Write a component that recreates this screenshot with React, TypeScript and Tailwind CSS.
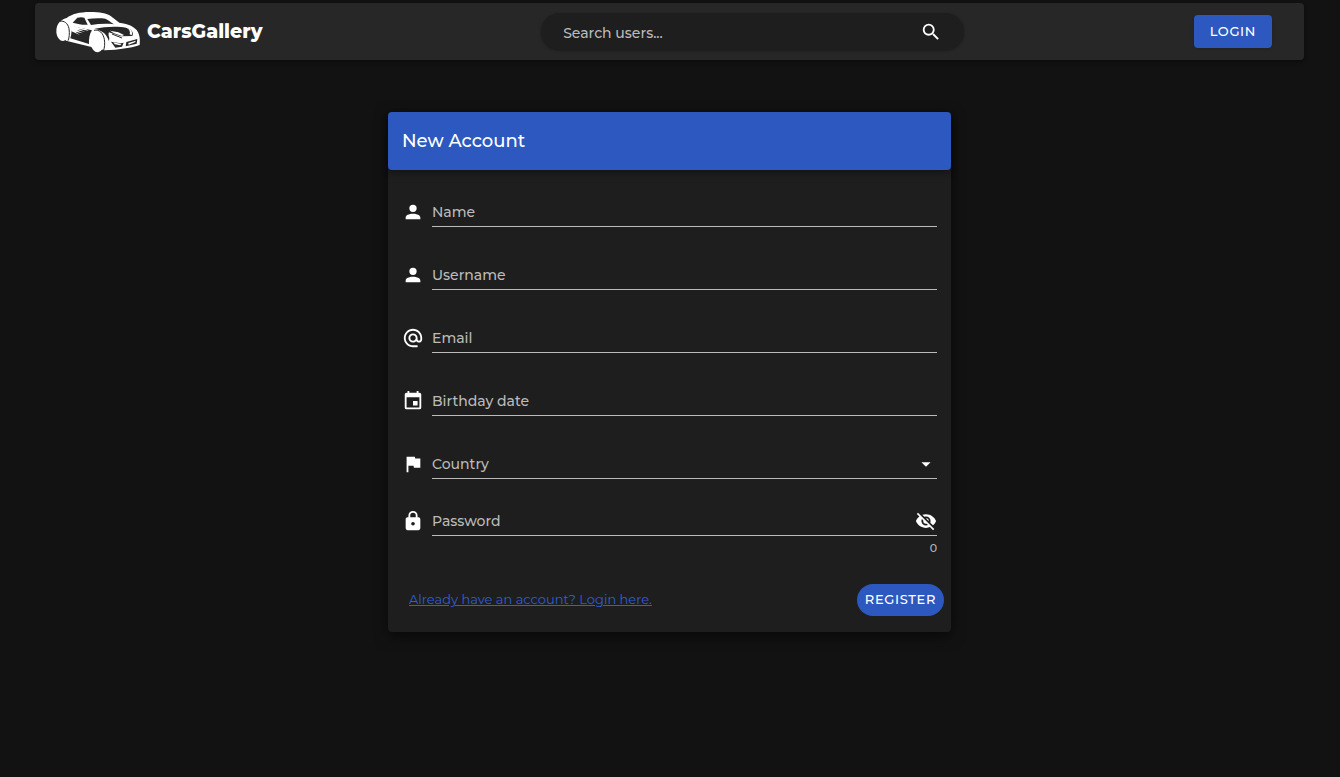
import { useState } from "react";
import type { ReactNode } from "react";

const icons = {
  account:
    "M12,4A4,4 0 0,1 16,8A4,4 0 0,1 12,12A4,4 0 0,1 8,8A4,4 0 0,1 12,4M12,14C16.42,14 20,15.79 20,18V20H4V18C4,15.79 7.58,14 12,14Z",
  at: "M12,15C12.81,15 13.5,14.7 14.11,14.11C14.7,13.5 15,12.81 15,12C15,11.19 14.7,10.5 14.11,9.89C13.5,9.3 12.81,9 12,9C11.19,9 10.5,9.3 9.89,9.89C9.3,10.5 9,11.19 9,12C9,12.81 9.3,13.5 9.89,14.11C10.5,14.7 11.19,15 12,15M12,2C14.75,2 17.1,3 19.05,4.95C21,6.9 22,9.25 22,12V13.45C22,14.45 21.65,15.3 21,16C20.3,16.67 19.5,17 18.5,17C17.3,17 16.31,16.5 15.56,15.5C14.56,16.5 13.38,17 12,17C10.63,17 9.45,16.5 8.46,15.54C7.5,14.55 7,13.38 7,12C7,10.63 7.5,9.45 8.46,8.46C9.45,7.5 10.63,7 12,7C13.38,7 14.55,7.5 15.54,8.46C16.5,9.45 17,10.63 17,12V13.45C17,13.86 17.16,14.22 17.46,14.53C17.76,14.84 18.11,15 18.5,15C18.92,15 19.27,14.84 19.57,14.53C19.87,14.22 20,13.86 20,13.45V12C20,9.81 19.23,7.93 17.65,6.35C16.07,4.77 14.19,4 12,4C9.81,4 7.93,4.77 6.35,6.35C4.77,7.93 4,9.81 4,12C4,14.19 4.77,16.07 6.35,17.65C7.93,19.23 9.81,20 12,20H17V22H12C9.25,22 6.9,21 4.95,19.05C3,17.1 2,14.75 2,12C2,9.25 3,6.9 4.95,4.95C6.9,3 9.25,2 12,2Z",
  calendar:
    "M19,19H5V8H19M16,1V3H8V1H6V3H5C3.89,3 3,3.89 3,5V19A2,2 0 0,0 5,21H19A2,2 0 0,0 21,19V5C21,3.89 20.1,3 19,3H18V1M17,12H12V17H17V12Z",
  flag: "M14.4,6L14,4H5V21H7V14H12.6L13,16H20V6H14.4Z",
  lock: "M12,17A2,2 0 0,0 14,15C14,13.89 13.1,13 12,13A2,2 0 0,0 10,15A2,2 0 0,0 12,17M18,8A2,2 0 0,1 20,10V20A2,2 0 0,1 18,22H6A2,2 0 0,1 4,20V10C4,8.89 4.9,8 6,8H7V6A5,5 0 0,1 12,1A5,5 0 0,1 17,6V8H18M12,3A3,3 0 0,0 9,6V8H15V6A3,3 0 0,0 12,3Z",
  menuDown: "M7,10L12,15L17,10H7Z",
  eyeOff:
    "M11.83,9L15,12.16C15,12.11 15,12.05 15,12A3,3 0 0,0 12,9C11.94,9 11.89,9 11.83,9M7.53,9.8L9.08,11.35C9.03,11.56 9,11.77 9,12A3,3 0 0,0 12,15C12.22,15 12.44,14.97 12.65,14.92L14.2,16.47C13.53,16.8 12.79,17 12,17A5,5 0 0,1 7,12C7,11.21 7.2,10.47 7.53,9.8M2,4.27L4.28,6.55L4.73,7C3.08,8.3 1.78,10 1,12C2.73,16.39 7,19.5 12,19.5C13.55,19.5 15.03,19.2 16.38,18.66L16.81,19.08L19.73,22L21,20.73L3.27,3M12,7A5,5 0 0,1 17,12C17,12.64 16.87,13.26 16.64,13.82L19.57,16.75C21.07,15.5 22.27,13.86 23,12C21.27,7.61 17,4.5 12,4.5C10.6,4.5 9.26,4.75 8,5.2L10.17,7.35C10.74,7.13 11.35,7 12,7Z",
  eye: "M12,9A3,3 0 0,0 9,12A3,3 0 0,0 12,15A3,3 0 0,0 15,12A3,3 0 0,0 12,9M12,17A5,5 0 0,1 7,12A5,5 0 0,1 12,7A5,5 0 0,1 17,12A5,5 0 0,1 12,17M12,4.5C7,4.5 2.73,7.61 1,12C2.73,16.39 7,19.5 12,19.5C17,19.5 21.27,16.39 23,12C21.27,7.61 17,4.5 12,4.5Z",
  magnify:
    "M9.5,3A6.5,6.5 0 0,1 16,9.5C16,11.11 15.41,12.59 14.44,13.73L14.71,14H15.5L20.5,19L19,20.5L14,15.5V14.71L13.73,14.44C12.59,15.41 11.11,16 9.5,16A6.5,6.5 0 0,1 3,9.5A6.5,6.5 0 0,1 9.5,3M9.5,5C7,5 5,7 5,9.5C5,12 7,14 9.5,14C12,14 14,12 14,9.5C14,7 12,5 9.5,5Z",
};

type IconName = keyof typeof icons;

function Icon({ name }: { name: IconName }) {
  return (
    <svg viewBox="0 0 24 24" className="size-[22px] shrink-0 fill-white" aria-hidden="true">
      <path d={icons[name]} />
    </svg>
  );
}

function CarLogo() {
  return (
    <svg viewBox="0 0 285 144" className="h-12 w-[95px]" aria-hidden="true">
      <g fill="#fff">
        <path d="M20 60C24 42 36 34 50 30C66 18 88 12 120 12C150 12 170 16 182 24L208 44C232 47 250 54 260 66C268 78 271 90 269 111C252 118 225 121 195 125L164 127L48 98Z" />
        <ellipse cx="37" cy="72" rx="18" ry="27" transform="rotate(-6 37 72)" />
        <ellipse cx="141" cy="102" rx="20" ry="31" transform="rotate(-6 141 102)" />
      </g>
      <g fill="#272727">
        <path d="M68 44L82 29C90 27 97 27 103 29L113 50C98 51 84 48 68 44Z" />
        <path d="M112 33C132 30 152 30 166 32C176 37 184 43 192 49C168 46 145 48 123 51Z" />
        <path d="M62 54L126 67C119 77 116 93 117 108L61 91C65 78 66 66 62 54Z" />
        <path d="M134 62C165 55 205 54 228 59C246 64 252 74 247 84L212 85L177 73C174 79 176 84 178 90L177 100C171 80 160 68 134 62Z" />
        <path d="M183 101L212 106L221 104L216 116L196 119Z" />
        <path d="M229 102L262 93L260 107L227 115Z" />
      </g>
      <g fill="none" stroke="#272727" strokeWidth="3">
        <path d="M30 40C42 37 54 46 57 62C59 78 58 88 54 98" />
        <path d="M132 67C148 63 160 76 163 94C165 108 164 118 160 130" />
        <path d="M186 78L216 90" />
      </g>
      <g fill="#fff">
        <path d="M60 52L110 64L116 68L84 63L106 71L80 67L98 76L76 71L90 81L64 70Z" />
        <path d="M180 68L205 73L222 81L216 84L192 76Z" />
        <path d="M230 59C243 63 249 70 245 82L239 79C242 71 238 64 230 59Z" />
        <path d="M190 103L214 108L211 112L194 109Z" />
        <path d="M235 105L258 98L255 103L236 110Z" />
      </g>
    </svg>
  );
}

function Field({
  id,
  label,
  icon,
  children,
}: {
  id: string;
  label: string;
  icon: IconName;
  children: ReactNode;
}) {
  return (
    <div className="flex items-start gap-2">
      <div className="flex h-7 items-center">
        <Icon name={icon} />
      </div>
      <div className="relative flex h-[29px] flex-1 items-center border-b border-[#bbbbbb] focus-within:border-white">
        {children}
        <label
          htmlFor={id}
          className="pointer-events-none absolute left-0 text-sm leading-7 text-[#bbbbbb] peer-focus:-top-5 peer-focus:text-xs peer-[:not(:placeholder-shown):not(select)]:-top-5 peer-[:not(:placeholder-shown):not(select)]:text-xs peer-[select:valid]:-top-5 peer-[select:valid]:text-xs"
        >
          {label}
        </label>
      </div>
    </div>
  );
}

const control = "peer h-7 w-full min-w-0 flex-1 bg-transparent text-sm text-white outline-none";

export default function App() {
  const [password, setPassword] = useState("");
  const [visible, setVisible] = useState(false);

  return (
    <div className="min-h-screen bg-[#121212] pt-[3px] font-['Montserrat','Inter',sans-serif] font-medium text-white">
      <header className="mr-9 ml-[35px] grid h-[57px] grid-cols-[8fr_7fr_5fr] items-center rounded-sm bg-[#272727] pr-8 pl-[15px] shadow-[0_2px_4px_rgba(0,0,0,0.4)]">
        <a href="#home" className="flex items-center gap-0.5">
          <CarLogo />
          <span className="text-[19px] leading-7 font-extrabold">CarsGallery</span>
        </a>
        <form
          role="search"
          className="flex h-[37px] w-full max-w-[423px] items-center justify-self-center rounded-full bg-[#1e1e1e] px-[22px] shadow-[0_1px_3px_rgba(0,0,0,0.3)]"
          onSubmit={(e) => e.preventDefault()}
        >
          <input
            type="text"
            aria-label="Search users"
            placeholder="Search users..."
            className="min-w-0 flex-1 bg-transparent pt-0.5 text-sm outline-none placeholder:text-[#bbbbbb]"
          />
          <button type="submit" aria-label="Search">
            <Icon name="magnify" />
          </button>
        </form>
        <button
          type="button"
          className="h-[33px] justify-self-end rounded-sm bg-[#2c58c0] px-4 text-[13px] tracking-wider shadow-sm"
        >
          LOGIN
        </button>
      </header>

      <main className="pt-[52px] pr-px">
        <form
          className="mx-auto w-full max-w-[563px] rounded-sm bg-[#1e1e1e] shadow-[0_4px_14px_rgba(0,0,0,0.55)]"
          onSubmit={(e) => e.preventDefault()}
        >
          <h1 className="flex h-[58px] items-center rounded-sm bg-[#2c58c0] px-3.5 text-lg shadow-[0_3px_6px_rgba(0,0,0,0.35)]">
            New Account
          </h1>
          <div className="px-3.5 pt-7">
            <div className="flex flex-col gap-[34px]">
              <Field id="name" label="Name" icon="account">
                <input id="name" type="text" placeholder=" " className={control} />
              </Field>
              <Field id="username" label="Username" icon="account">
                <input id="username" type="text" placeholder=" " className={control} />
              </Field>
              <Field id="email" label="Email" icon="at">
                <input id="email" type="email" placeholder=" " className={control} />
              </Field>
              <Field id="birthday" label="Birthday date" icon="calendar">
                <input id="birthday" type="text" placeholder=" " className={control} />
              </Field>
              <Field id="country" label="Country" icon="flag">
                <select id="country" required defaultValue="" className={`${control} appearance-none`}>
                  <option value="" />
                </select>
                <span className="pointer-events-none">
                  <Icon name="menuDown" />
                </span>
              </Field>
            </div>
            <div className="pt-7">
              <Field id="password" label="Password" icon="lock">
                <input
                  id="password"
                  type={visible ? "text" : "password"}
                  placeholder=" "
                  value={password}
                  onChange={(e) => setPassword(e.target.value)}
                  className={control}
                />
                <button type="button" aria-label="Toggle password visibility" onClick={() => setVisible(!visible)}>
                  <Icon name={visible ? "eye" : "eyeOff"} />
                </button>
              </Field>
              <p className="pt-1 text-right text-[11px] leading-4 text-[#bbbbbb]">{password.length}</p>
            </div>
          </div>
          <div className="flex items-center justify-between pt-7 pr-[7px] pb-4 pl-[21px]">
            <a href="#login" className="text-[13px] font-normal text-[#2f5fd3] underline">
              Already have an account? Login here.
            </a>
            <button
              type="submit"
              className="h-8 rounded-full bg-[#2c58c0] px-2 text-[13px] tracking-wider"
            >
              REGISTER
            </button>
          </div>
        </form>
      </main>
    </div>
  );
}
